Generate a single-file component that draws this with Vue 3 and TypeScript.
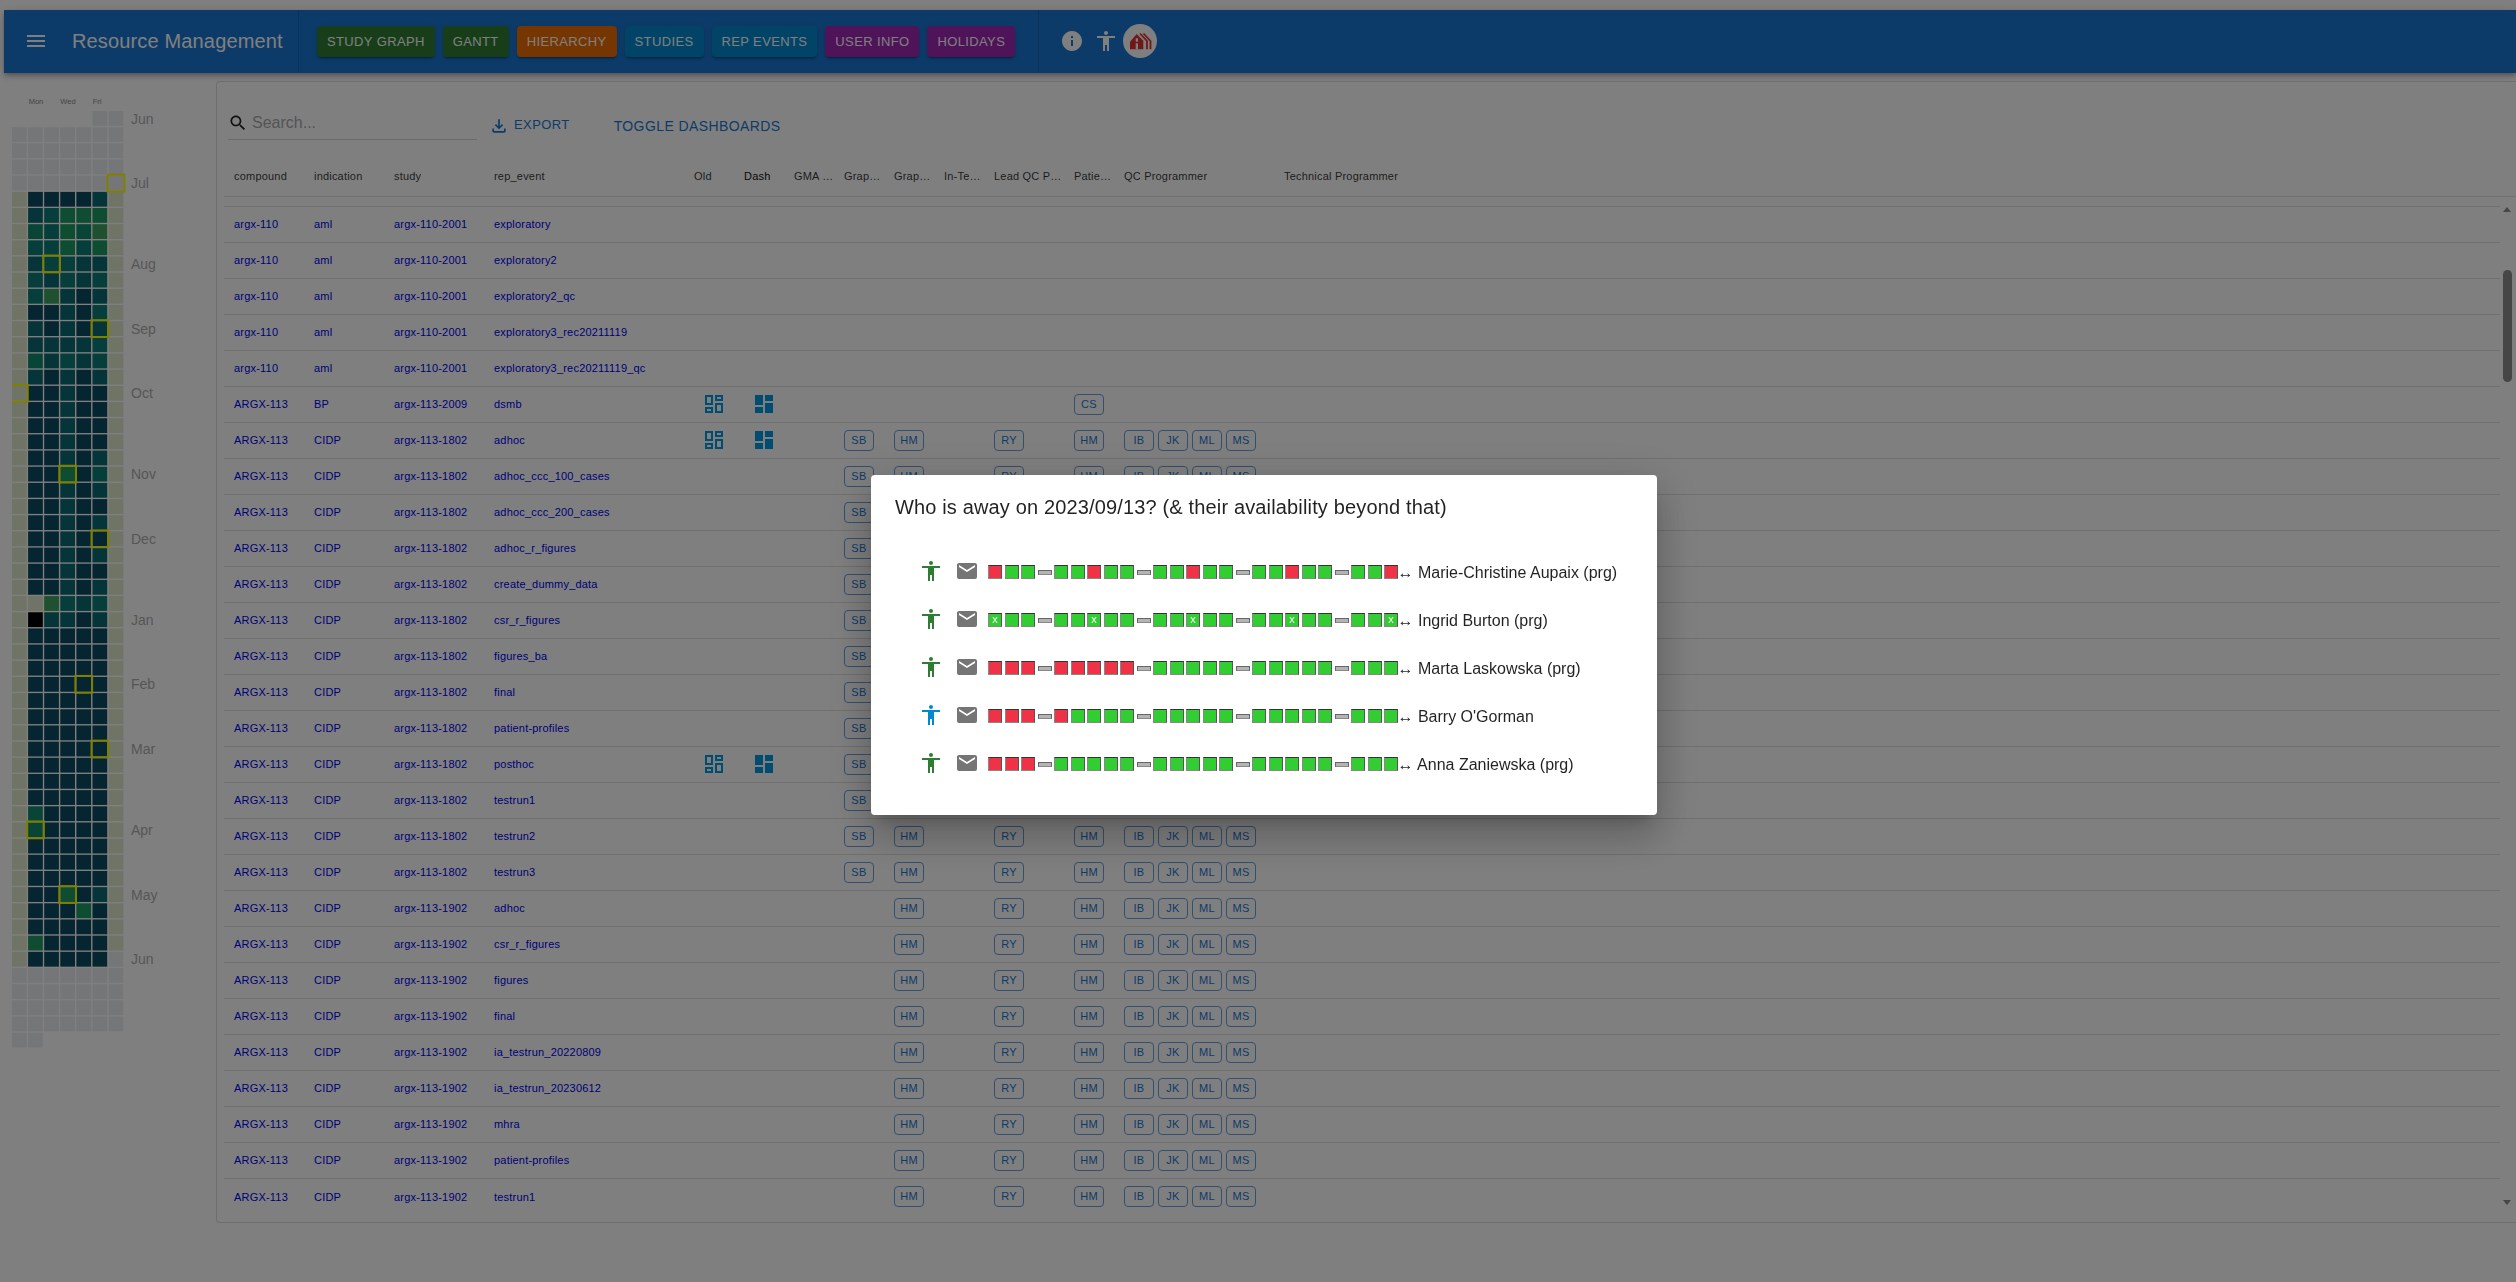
<script setup lang="ts">
import { computed } from 'vue'

const navButtons = [
  { label: 'Study Graph', color: 'green' },
  { label: 'Gantt', color: 'green' },
  { label: 'Hierarchy', color: 'orange' },
  { label: 'Studies', color: 'blue' },
  { label: 'Rep Events', color: 'blue' },
  { label: 'User Info', color: 'purple' },
  { label: 'Holidays', color: 'purple' }
]

const columns = [
  'compound', 'indication', 'study', 'rep_event', 'Old', 'Dash', 'GMA Programmer', 'Graph QC',
  'Graph Programmer', 'In-Team', 'Lead QC Programmer', 'Patient Profiles', 'QC Programmer', 'Technical Programmer'
]

// compound, indication, study, rep_event, kind
// kind: n = no chips, d = dashboard + CS only, f = dash + all, a = all, b = all but SB
type Row = [string, string, string, string, string]
const rows: Row[] = [
  ['argx-110', 'aml', 'argx-110-2001', 'exploratory', 'n'],
  ['argx-110', 'aml', 'argx-110-2001', 'exploratory2', 'n'],
  ['argx-110', 'aml', 'argx-110-2001', 'exploratory2_qc', 'n'],
  ['argx-110', 'aml', 'argx-110-2001', 'exploratory3_rec20211119', 'n'],
  ['argx-110', 'aml', 'argx-110-2001', 'exploratory3_rec20211119_qc', 'n'],
  ['ARGX-113', 'BP', 'argx-113-2009', 'dsmb', 'd'],
  ['ARGX-113', 'CIDP', 'argx-113-1802', 'adhoc', 'f'],
  ['ARGX-113', 'CIDP', 'argx-113-1802', 'adhoc_ccc_100_cases', 'a'],
  ['ARGX-113', 'CIDP', 'argx-113-1802', 'adhoc_ccc_200_cases', 'a'],
  ['ARGX-113', 'CIDP', 'argx-113-1802', 'adhoc_r_figures', 'a'],
  ['ARGX-113', 'CIDP', 'argx-113-1802', 'create_dummy_data', 'a'],
  ['ARGX-113', 'CIDP', 'argx-113-1802', 'csr_r_figures', 'a'],
  ['ARGX-113', 'CIDP', 'argx-113-1802', 'figures_ba', 'a'],
  ['ARGX-113', 'CIDP', 'argx-113-1802', 'final', 'a'],
  ['ARGX-113', 'CIDP', 'argx-113-1802', 'patient-profiles', 'a'],
  ['ARGX-113', 'CIDP', 'argx-113-1802', 'posthoc', 'f'],
  ['ARGX-113', 'CIDP', 'argx-113-1802', 'testrun1', 'a'],
  ['ARGX-113', 'CIDP', 'argx-113-1802', 'testrun2', 'a'],
  ['ARGX-113', 'CIDP', 'argx-113-1802', 'testrun3', 'a'],
  ['ARGX-113', 'CIDP', 'argx-113-1902', 'adhoc', 'b'],
  ['ARGX-113', 'CIDP', 'argx-113-1902', 'csr_r_figures', 'b'],
  ['ARGX-113', 'CIDP', 'argx-113-1902', 'figures', 'b'],
  ['ARGX-113', 'CIDP', 'argx-113-1902', 'final', 'b'],
  ['ARGX-113', 'CIDP', 'argx-113-1902', 'ia_testrun_20220809', 'b'],
  ['ARGX-113', 'CIDP', 'argx-113-1902', 'ia_testrun_20230612', 'b'],
  ['ARGX-113', 'CIDP', 'argx-113-1902', 'mhra', 'b'],
  ['ARGX-113', 'CIDP', 'argx-113-1902', 'patient-profiles', 'b'],
  ['ARGX-113', 'CIDP', 'argx-113-1902', 'testrun1', 'b']
]

const people = [
  { name: 'Marie-Christine Aupaix (prg)', days: 'rgg-ggrgg-ggrgg-ggrgg-ggr', color: 'green' },
  { name: 'Ingrid Burton (prg)', days: 'xgg-ggxgg-ggxgg-ggxgg-ggx', color: 'green' },
  { name: 'Marta Laskowska (prg)', days: 'rrr-rrrrr-ggggg-ggggg-ggg', color: 'green' },
  { name: "Barry O'Gorman", days: 'rrr-rgggg-ggggg-ggggg-ggg', color: 'blue' },
  { name: 'Anna Zaniewska (prg)', days: 'rrr-ggggg-ggggg-ggggg-ggg', color: 'green' }
]

// calendar heatmap, weekday columns only, rows 5 to 52
const heatRows = [
  'aaaab', 'bceee', 'dcedf', 'ccece', 'bccbb', 'cbcbc', 'cfbab', 'aabac', 'babab', 'bbbbc',
  'dbcbc', 'babab', 'aabaa', 'aabaa', 'aabaa', 'aabaa', 'aabab', 'aaeac', 'aabab', 'aabaa',
  'aabab', 'aabaa', 'aabab', 'aabaa', 'aabab', 'wfcbc', 'kbbab', 'aaaaa', 'aaaaa', 'aaaaa',
  'aaaaa', 'aaaaa', 'aaaaa', 'aaaaa', 'aaaaa', 'aaaaa', 'aaaaa', 'aaaaa', 'daaaa', 'daaaa',
  'aaaaa', 'aaaaa', 'aaaaa', 'aaeab', 'aaaea', 'aaaaa', 'eaaaa', 'aaaaa'
]
const heatColors: Record<string, string> = {
  a: '#0a4a62', b: '#0a6a72', c: '#0c7c78', d: '#128a6e', e: '#1c9a62', f: '#3fa05e',
  k: '#000000', w: '#dee9cc', o: '#dee9cc', z: '#ebedf0'
}
const pitchX = 16.1
const pitchY = 16.17
const top = 21

const cells = computed(() => {
  const out: { key: string; x: number; y: number; fill: string }[] = []
  for (let r = 0; r < 58; r++) {
    for (let c = 0; c < 7; c++) {
      if (r === 0 && c < 5) continue
      if (r === 57 && c > 1) continue
      let k = 'z'
      if (r >= 5 && r <= 52) {
        if (c === 0) k = 'o'
        else if (c === 6) k = r === 52 ? 'z' : 'o'
        else k = heatRows[r - 5][c - 1]
      }
      out.push({ key: r + '-' + c, x: c * pitchX, y: top + r * pitchY, fill: heatColors[k] })
    }
  }
  return out
})

const firstOfMonth = [[4, 6], [9, 2], [13, 5], [17, 0], [22, 3], [26, 5], [35, 4], [39, 5], [44, 1], [48, 3]]
const months: [string, number][] = [
  ['Jun', 0], ['Jul', 4], ['Aug', 9], ['Sep', 13], ['Oct', 17], ['Nov', 22], ['Dec', 26],
  ['Jan', 31], ['Feb', 35], ['Mar', 39], ['Apr', 44], ['May', 48], ['Jun', 52]
]
</script>

<template>
  <div class="page">
    <header class="topbar">
      <svg class="menu" viewBox="0 0 24 24" width="24" height="24"><path d="M3 18h18v-2H3v2zm0-5h18v-2H3v2zm0-7v2h18V6H3z" /></svg>
      <span class="title">Resource Management</span>
      <i class="divider first"></i>
      <nav class="nav">
        <button v-for="b in navButtons" :key="b.label" class="nav-btn" :class="b.color">{{ b.label }}</button>
      </nav>
      <i class="divider second"></i>
      <svg class="top-icon info" viewBox="0 0 24 24" width="24" height="24"><path d="M12 2C6.48 2 2 6.48 2 12s4.48 10 10 10 10-4.48 10-10S17.52 2 12 2zm1 15h-2v-6h2v6zm0-8h-2V7h2v2z" /></svg>
      <svg class="top-icon person" viewBox="0 0 24 24" width="24" height="24"><path d="M12 2c1.1 0 2 .9 2 2s-.9 2-2 2-2-.9-2-2 .9-2 2-2zm9 7h-6v13h-2v-6h-2v6H9V9H3V7h18v2z" /></svg>
      <svg class="avatar" viewBox="0 0 34 34" width="34" height="34">
        <circle cx="17" cy="17" r="17" fill="#fff" />
        <polygon points="7,17.7 13.7,10 20.3,16.7 20.3,25.3 7,25.3" fill="#e03030" />
        <rect x="12.7" y="14.3" width="2.3" height="3.4" fill="#fff" />
        <rect x="12.7" y="19.3" width="2.3" height="6" fill="#fff" />
        <polyline points="17,9.5 24,17 24,25.3" fill="none" stroke="#e03030" stroke-width="1.8" />
        <polyline points="20.5,9.5 27.5,17 27.5,25.3" fill="none" stroke="#e03030" stroke-width="1.8" />
      </svg>
    </header>

    <div class="main">
      <aside class="heat">
        <svg width="190" height="960" viewBox="0 0 190 960">
          <text x="24" y="13.5" class="dow">Mon</text>
          <text x="56" y="13.5" class="dow">Wed</text>
          <text x="85" y="13.5" class="dow">Fri</text>
          <rect v-for="c in cells" :key="c.key" :x="c.x" :y="c.y" width="14.7" height="14.8" :fill="c.fill" />
          <rect
            v-for="m in firstOfMonth"
            :key="m[0]"
            :x="m[1] * pitchX - 1"
            :y="top + m[0] * pitchY - 1"
            width="16.7"
            height="16.8"
            fill="none"
            stroke="#ffff00"
            stroke-width="2"
          />
          <text v-for="m in months" :key="m[0] + m[1]" x="119" :y="top + m[1] * pitchY + 12.5" class="month">{{ m[0] }}</text>
        </svg>
      </aside>

      <section class="card">
        <div class="tools">
          <div class="search">
            <svg viewBox="0 0 24 24" width="20" height="20"><path d="M15.5 14h-.79l-.28-.27C15.41 12.59 16 11.11 16 9.5 16 5.91 13.09 3 9.5 3S3 5.91 3 9.5 5.91 16 9.5 16c1.61 0 3.09-.59 4.23-1.57l.27.28v.79l5 4.99L20.49 19l-4.99-5zm-6 0C7.01 14 5 11.99 5 9.5S7.01 5 9.5 5 14 7.01 14 9.5 11.99 14 9.5 14z" /></svg>
            <span>Search...</span>
          </div>
          <button class="link export">
            <svg viewBox="0 0 24 24" width="20" height="20"><path d="M18 15v3H6v-3H4v3c0 1.1.9 2 2 2h12c1.1 0 2-.9 2-2v-3h-2zm-1-4l-1.41-1.41L13 12.17V4h-2v8.17L8.41 9.59 7 11l5 5 5-5z" /></svg>
            Export
          </button>
          <button class="link toggle">Toggle Dashboards</button>
        </div>

        <div class="thead">
          <div v-for="c in columns" :key="c" class="cell" :class="{ dark: c === 'Dash' }">{{ c }}</div>
        </div>

        <div class="tbody">
          <div v-for="(r, i) in rows" :key="i" class="trow">
            <a class="cell">{{ r[0] }}</a>
            <a class="cell">{{ r[1] }}</a>
            <a class="cell">{{ r[2] }}</a>
            <a class="cell">{{ r[3] }}</a>
            <div class="cell">
              <svg v-if="r[4] === 'd' || r[4] === 'f'" class="dash-icon" viewBox="0 0 24 24" width="24" height="24"><path d="M19 5v2h-4V5h4M9 5v6H5V5h4m10 8v6h-4v-6h4M9 17v2H5v-2h4M21 3h-8v6h8V3zM11 3H3v10h8V3zm10 8h-8v10h8V11zm-10 4H3v6h8v-6z" /></svg>
            </div>
            <div class="cell">
              <svg v-if="r[4] === 'd' || r[4] === 'f'" class="dash-icon" viewBox="0 0 24 24" width="24" height="24"><path d="M3 13h8V3H3v10zm0 8h8v-6H3v6zm10 0h8V11h-8v10zm0-18v6h8V3h-8z" /></svg>
            </div>
            <div class="cell"></div>
            <div class="cell"><span v-if="r[4] === 'a' || r[4] === 'f'" class="chip">SB</span></div>
            <div class="cell"><span v-if="r[4] !== 'n' && r[4] !== 'd'" class="chip">HM</span></div>
            <div class="cell"></div>
            <div class="cell"><span v-if="r[4] !== 'n' && r[4] !== 'd'" class="chip">RY</span></div>
            <div class="cell">
              <span v-if="r[4] === 'd'" class="chip">CS</span>
              <span v-else-if="r[4] !== 'n'" class="chip">HM</span>
            </div>
            <div class="cell chips">
              <template v-if="r[4] !== 'n' && r[4] !== 'd'">
                <span v-for="p in ['IB', 'JK', 'ML', 'MS']" :key="p" class="chip">{{ p }}</span>
              </template>
            </div>
            <div class="cell"></div>
          </div>
        </div>

        <div class="scrollbar">
          <i class="arrow up"></i>
          <i class="thumb"></i>
          <i class="arrow down"></i>
        </div>
      </section>
    </div>

    <div class="overlay">
      <div class="dialog">
        <h2>Who is away on 2023/09/13? (&amp; their availability beyond that)</h2>
        <div class="people">
          <div v-for="p in people" :key="p.name" class="person-row">
            <svg class="p-icon" :class="p.color" viewBox="0 0 24 24" width="24" height="24"><path d="M12 2c1.1 0 2 .9 2 2s-.9 2-2 2-2-.9-2-2 .9-2 2-2zm9 7h-6v13h-2v-6h-2v6H9V9H3V7h18v2z" /></svg>
            <svg class="mail" viewBox="0 0 24 24" width="24" height="24"><path d="M20 4H4c-1.1 0-1.99.9-1.99 2L2 18c0 1.1.9 2 2 2h16c1.1 0 2-.9 2-2V6c0-1.1-.9-2-2-2zm0 4l-8 5-8-5V6l8 5 8-5v2z" /></svg>
            <div class="days">
              <template v-for="(d, i) in p.days.split('')" :key="i">
                <i v-if="d === '-'" class="gap"></i>
                <i v-else class="day" :class="d">{{ d === 'x' ? 'x' : '' }}</i>
              </template>
            </div>
            <span class="name">↔ {{ p.name }}</span>
          </div>
        </div>
      </div>
    </div>
  </div>
</template>

<style>
html, body {
  margin: 0;
  background: #fff;
  overflow: hidden;
}
</style>

<style scoped>
.page {
  height: 1282px;
  overflow: hidden;
  font-family: "Liberation Sans", Arial, sans-serif;
  color: #222;
}

.topbar {
  display: flex;
  align-items: center;
  height: 62.6px;
  margin: 10px 0 0 4px;
  padding-left: 20px;
  background: #1976d2;
  color: #fff;
  box-shadow: 0 2px 4px -1px rgba(0,0,0,.2), 0 4px 5px rgba(0,0,0,.14), 0 1px 10px rgba(0,0,0,.12);
  position: relative;
}
.menu { fill: #fff; margin-right: 24px; }
.title { font-size: 20px; width: 211px; white-space: nowrap; letter-spacing: .15px; }
.divider { align-self: stretch; width: 1px; background: rgba(0,0,0,.12); }
.divider.first { margin: 0 18px 0 15px; }
.divider.second { margin: 0 21px 0 23px; }
.nav { display: flex; gap: 8px; }
.nav-btn {
  height: 31px;
  padding: 0 10px;
  border: 0;
  border-radius: 4px;
  font: 13px "Liberation Sans", Arial, sans-serif;
  letter-spacing: .37px;
  text-transform: uppercase;
  color: #fff;
  box-shadow: 0 3px 1px -2px rgba(0,0,0,.2), 0 2px 2px rgba(0,0,0,.14), 0 1px 5px rgba(0,0,0,.12);
}
.nav-btn.green { background: #2e7d32; }
.nav-btn.orange { background: #ed6c02; }
.nav-btn.blue { background: #0288d1; }
.nav-btn.purple { background: #9c27b0; }
.top-icon { fill: #fff; }
.info { margin-right: 10px; }
.person { margin-right: 5px; }

.main { display: flex; margin-top: 8.4px; }
.heat { width: 216px; flex: none; padding: 9px 0 0 12px; box-sizing: border-box; }
.heat svg { display: block; overflow: hidden; }
.dow { font-size: 7.5px; fill: #8a8a8a; text-anchor: middle; }
.month { font-size: 14px; fill: #adadad; }

.card {
  flex: 1;
  height: 1142px;
  box-sizing: border-box;
  border: 1px solid #ddd;
  border-right: 0;
  border-radius: 4px 0 0 4px;
  position: relative;
}

.tools { display: flex; height: 58px; padding: 0 0 0 11px; box-sizing: border-box; }
.search {
  display: flex;
  align-items: center;
  width: 249px;
  height: 32px;
  margin-top: 25px;
  border-bottom: 1px solid #d6d6d6;
  box-sizing: content-box;
  font-size: 16px;
  color: #a8a8a8;
}
.search svg { margin-right: 4px; fill: #222; }
.link {
  display: flex;
  align-items: center;
  border: 0;
  padding: 0;
  background: none;
  font-family: inherit;
  letter-spacing: .4px;
  text-transform: uppercase;
  color: #1976d2;
}
.link svg { fill: #1976d2; }
.export { font-size: 13px; gap: 5px; margin: 32px 0 0 12px; height: 22px; align-items: center; }
.export svg { margin-top: 2px; }
.toggle { font-size: 14px; margin: 33px 0 0 44px; height: 22px; }

.thead, .trow {
  display: grid;
  grid-template-columns: 80px 80px 100px 200px 50px 50px 50px 50px 50px 50px 80px 50px 160px 1fr;
  align-items: center;
  margin-left: 7px;
}
.thead { height: 57px; padding-top: 17px; border-bottom: 1px solid #e0e0e0; box-sizing: border-box; font-size: 11px; letter-spacing: .2px; color: #222; }
.thead .cell { color: rgba(0,0,0,.8); }
.thead .dark { color: #111; }
.tbody { margin-top: 9px; border-top: 1px solid #e0e0e0; margin-left: 7px; margin-right: 16px; height: 1007px; overflow: hidden; }
.trow { height: 36px; margin-left: 0; box-sizing: border-box; border-bottom: 1px solid #e0e0e0; font-size: 11px; letter-spacing: .2px; }
.trow:last-child { border-bottom: 0; }
.cell {
  padding-left: 10px;
  white-space: nowrap;
  overflow: hidden;
  text-overflow: ellipsis;
  min-width: 0;
}
a.cell { color: #0000ee; }
.dash-icon { display: block; margin-left: 8px; fill: #039be5; }
.chips { display: flex; gap: 4px; }
.chip {
  display: block;
  flex: none;
  width: 30px;
  height: 21px;
  padding-bottom: 1px;
  box-sizing: border-box;
  border: 1px solid #6aa0dc;
  border-radius: 4px;
  font-size: 11px;
  line-height: 18px;
  letter-spacing: .3px;
  text-align: center;
  color: #1976d2;
}

.scrollbar { position: absolute; left: 2286px; top: 125px; width: 9px; height: 998px; }
.scrollbar i { position: absolute; left: 0; display: block; }
.arrow { width: 0; height: 0; border-left: 4.5px solid transparent; border-right: 4.5px solid transparent; }
.arrow.up { top: 0; border-bottom: 5px solid #8c8c8c; }
.arrow.down { bottom: 0; border-top: 5px solid #8c8c8c; }
.thumb { top: 63px; width: 9px; height: 112px; border-radius: 4.5px; background: #8c8c8c; }

.overlay {
  position: fixed;
  inset: 0;
  display: flex;
  align-items: center;
  justify-content: center;
  padding: 8px 0 0 12px;
  background: rgba(0,0,0,.5);
}
.dialog {
  width: 786px;
  height: 340px;
  box-sizing: border-box;
  border-radius: 4px;
  background: #fff;
  box-shadow: 0 11px 15px -7px rgba(0,0,0,.2), 0 24px 38px 3px rgba(0,0,0,.14), 0 9px 46px 8px rgba(0,0,0,.12);
}
.dialog h2 {
  margin: 0;
  padding: 16px 24px;
  font-size: 20px;
  font-weight: 400;
  line-height: 32px;
  letter-spacing: .15px;
  color: rgba(0,0,0,.87);
}
.people { padding: 9px 0 0 48px; }
.person-row { display: flex; align-items: center; height: 48px; }
.p-icon { margin-top: -2px; margin-right: 12px; }
.p-icon.green { fill: #2e7d32; }
.p-icon.blue { fill: #0288d1; }
.mail { margin-top: -2px; margin-right: 9px; fill: #757575; }
.days { display: flex; align-items: center; }
.day {
  display: block;
  width: 14px;
  height: 14px;
  margin-right: 2.5px;
  box-sizing: border-box;
  border: 1px solid;
  border-color: #333 #555 #888 #888;
  font: 11px/11px "Liberation Sans", Arial, sans-serif;
  text-align: center;
  color: #fff;
}
.day.r { background: #f03246; }
.day.g, .day.x { background: #32cd32; }
.gap {
  display: block;
  width: 14px;
  height: 5px;
  margin-right: 2.5px;
  box-sizing: border-box;
  border: 1px solid #666;
  border-bottom-color: #888;
  background: #b4b4b4;
}
.name { margin: 1px 0 0 -3px; font-size: 16px; color: rgba(0,0,0,.87); white-space: nowrap; }
</style>
